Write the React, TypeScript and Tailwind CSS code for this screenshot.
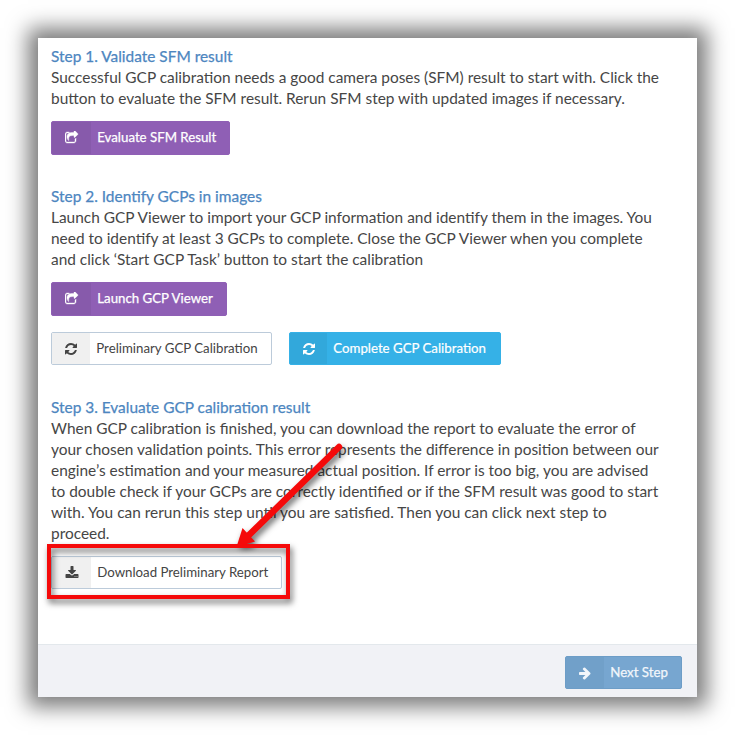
import React from "react";

const paths = {
  share:
    "M1408 928v320q0 119-84.5 203.5t-203.5 84.5h-832q-119 0-203.5-84.5t-84.5-203.5v-832q0-119 84.5-203.5t203.5-84.5h255q13 0 22.5 9.5t9.5 22.5q0 27-26 32-77 26-133 60-10 4-16 4h-112q-66 0-113 47t-47 113v832q0 66 47 113t113 47h832q66 0 113-47t47-113v-214q0-19 18-29 28-13 54-37 16-16 35-8 21 9 21 29zm237-496l-384 384q-18 19-45 19-12 0-25-5-39-17-39-59v-192h-160q-323 0-438 131-119 137-74 473 3 23-20 34-8 2-12 2-16 0-26-13-10-14-21-31t-39.5-68.5-49.5-99.5-38.5-114-17.5-122q0-49 3.5-91t14-90 28-88 47-81.5 68.5-74 94.5-61.5 124.5-48.5 159.5-30.5 196.5-11h160v-192q0-42 39-59 13-5 25-5 26 0 45 19l384 384q19 19 19 45t-19 45z",
  refresh:
    "M1639 1056q0 5-1 7-64 268-268 434.5t-478 166.5q-146 0-282.5-55t-243.5-157l-129 129q-19 19-45 19t-45-19-19-45v-448q0-26 19-45t45-19h448q26 0 45 19t19 45-19 45l-137 137q71 66 161 102t187 36q134 0 250-65t186-179q11-17 53-117 8-23 30-23h192q13 0 22.5 9.5t9.5 22.5zm25-800v448q0 26-19 45t-45 19h-448q-26 0-45-19t-19-45 19-45l138-138q-148-137-349-137-134 0-250 65t-186 179q-11 17-53 117-8 23-30 23h-199q-13 0-22.5-9.5t-9.5-22.5v-7q65-268 270-434.5t480-166.5q146 0 284 55.5t245 156.5l130-129q19-19 45-19t45 19 19 45z",
  download:
    "M1344 1344q0-26-19-45t-45-19-45 19-19 45 19 45 45 19 45-19 19-45zm256 0q0-26-19-45t-45-19-45 19-19 45 19 45 45 19 45-19 19-45zm128-224v320q0 40-28 68t-68 28h-1472q-40 0-68-28t-28-68v-320q0-40 28-68t68-28h465l135 136q58 56 136 56t136-56l136-136h464q40 0 68 28t28 68zm-325-569q17 41-14 70l-448 448q-18 19-45 19t-45-19l-448-448q-31-29-14-70 17-39 59-39h256v-448q0-26 19-45t45-19h256q26 0 45 19t19 45v448h256q42 0 59 39z",
  arrow:
    "M1600 960q0 54-37 91l-651 651q-39 37-91 37-51 0-90-37l-75-75q-38-38-38-91t38-91l293-293h-704q-52 0-84.5-37.5t-32.5-90.5v-128q0-53 32.5-90.5t84.5-37.5h704l-293-294q-38-36-38-90t38-90l75-75q38-38 90-38 53 0 91 38l651 651q37 35 37 90z",
};

function Icon({ name }: { name: keyof typeof paths }) {
  return (
    <svg viewBox="0 0 1792 1792" className="size-3.5 fill-current" aria-hidden="true">
      <path d={paths[name]} stroke="currentColor" strokeWidth={name === "share" ? 50 : 0} />
    </svg>
  );
}

type ButtonProps = {
  icon: keyof typeof paths;
  iconBox: string;
  className: string;
  children: React.ReactNode;
};

function LabeledButton({ icon, iconBox, className, children }: ButtonProps) {
  return (
    <button className={`flex items-stretch overflow-hidden rounded-[2px] border text-[13.25px] ${className}`}>
      <span className={`flex shrink-0 items-center justify-center ${iconBox}`}>
        <Icon name={icon} />
      </span>
      <span className="flex flex-1 items-center pl-[6.25px] whitespace-nowrap">{children}</span>
    </button>
  );
}

function Step({ title, lines }: { title: string; lines: string[] }) {
  return (
    <div className="text-[15.43px] leading-[21px] whitespace-nowrap text-[#464646]">
      <h2 className="text-[#4d86bf] [-webkit-text-stroke:0.25px_#4d86bf]">{title}</h2>
      {lines.map((line) => (
        <p key={line}>{line}</p>
      ))}
    </div>
  );
}

const purple = "border-[#8f5fb5] bg-[#8f5fb5] text-white [-webkit-text-stroke:0.25px_white]";
const light = "border-[#bccbda] bg-white text-[#444]";

export default function App() {
  return (
    <div className="h-[735px] w-[735px] overflow-hidden bg-white p-[38px] font-['Lato',sans-serif]">
      <main className="relative flex h-[659px] w-[659px] flex-col bg-white shadow-[0_0_20px_10px_rgba(0,0,0,0.52)]">
        <div className="flex h-[606px] flex-col items-start px-[13px] pt-2">
          <Step
            title="Step 1. Validate SFM result"
            lines={[
              "Successful GCP calibration needs a good camera poses (SFM) result to start with. Click the",
              "button to evaluate the SFM result. Rerun SFM step with updated images if necessary.",
            ]}
          />
          <LabeledButton icon="share" iconBox="w-[39px] bg-[#875aab]" className={`mt-3 h-[34px] w-[179px] ${purple}`}>
            Evaluate SFM Result
          </LabeledButton>
          <div className="h-[31px] shrink-0" />
          <Step
            title="Step 2. Identify GCPs in images"
            lines={[
              "Launch GCP Viewer to import your GCP information and identify them in the images. You",
              "need to identify at least 3 GCPs to complete. Close the GCP Viewer when you complete",
              "and click ‘Start GCP Task’ button to start the calibration",
            ]}
          />
          <LabeledButton icon="share" iconBox="w-[39px] bg-[#875aab]" className={`mt-3 h-[34px] w-[176px] ${purple}`}>
            Launch GCP Viewer
          </LabeledButton>
          <div className="mt-4 flex gap-[17px]">
            <LabeledButton icon="refresh" iconBox="w-[38px] bg-[#f0f0f0]" className={`h-[33px] w-[221px] ${light}`}>
              Preliminary GCP Calibration
            </LabeledButton>
            <LabeledButton
              icon="refresh"
              iconBox="w-[37px] bg-[#32a8db]"
              className="h-[33px] w-[212px] border-[#35b1e7] bg-[#35b1e7] text-white [-webkit-text-stroke:0.2px_white]"
            >
              Complete GCP Calibration
            </LabeledButton>
          </div>
          <div className="h-8 shrink-0" />
          <Step
            title="Step 3. Evaluate GCP calibration result"
            lines={[
              "When GCP calibration is finished, you can download the report to evaluate the error of",
              "your chosen validation points. This error represents the difference in position between our",
              "engine’s estimation and your measured actual position. If error is too big, you are advised",
              "to double check if your GCPs are correctly identified or if the SFM result was good to start",
              "with. You can rerun this step until you are satisfied. Then you can click next step to",
              "proceed.",
            ]}
          />
          <LabeledButton icon="download" iconBox="w-[39px] bg-[#f0f0f0]" className={`mt-3 h-[33px] w-[231px] ${light}`}>
            Download Preliminary Report
          </LabeledButton>
        </div>
        <footer className="flex h-[53px] justify-end border-t border-[#e3e8ec] bg-[#f1f2f6] pt-[11px] pr-[15px]">
          <LabeledButton
            icon="arrow"
            iconBox="w-[38px] bg-[#71a0c9]"
            className="h-[33px] w-[117px] border-[#6d9dc7] bg-[#77a6d0] text-[#f2f6fb] [-webkit-text-stroke:0.25px_#f2f6fb]"
          >
            Next Step
          </LabeledButton>
        </footer>

        {/* Callout drawn over the report button */}
        <svg className="pointer-events-none absolute inset-0" width="659" height="659" viewBox="38 38 659 659">
          <g style={{ filter: "drop-shadow(2px 4px 3px rgba(0,0,0,0.6))" }}>
            <rect x="49" y="546" width="239" height="51" fill="none" stroke="#f50a0a" strokeWidth="4" />
            <path d="M339 447L248 536" stroke="#f50a0a" strokeWidth="6.5" strokeLinecap="round" />
            <path d="M236.5 547L242.5 528L255 541.5Z" fill="#f50a0a" />
          </g>
        </svg>
      </main>
    </div>
  );
}
